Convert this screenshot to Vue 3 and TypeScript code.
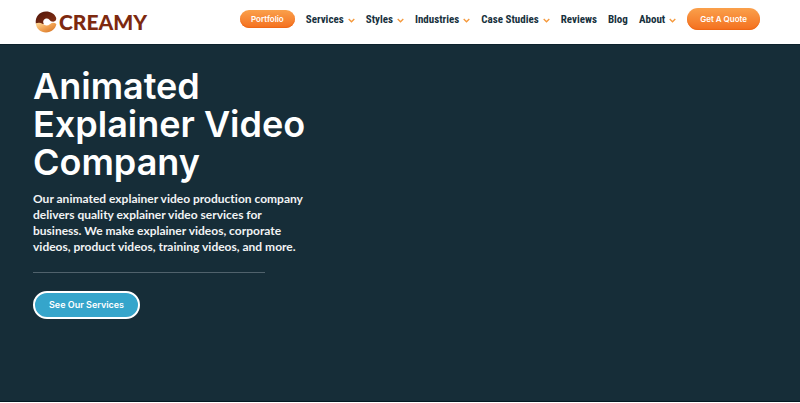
<script setup lang="ts">
interface NavItem {
  label: string
  hasMenu: boolean
}

const navItems: NavItem[] = [
  { label: 'Services', hasMenu: true },
  { label: 'Styles', hasMenu: true },
  { label: 'Industries', hasMenu: true },
  { label: 'Case Studies', hasMenu: true },
  { label: 'Reviews', hasMenu: false },
  { label: 'Blog', hasMenu: false },
  { label: 'About', hasMenu: true },
]
</script>

<template>
  <div class="page">
    <header class="header">
      <a class="logo" href="#">
        <svg class="logo-mark" viewBox="0 0 22 22" aria-hidden="true">
          <defs>
            <linearGradient id="cream" x1="0" y1="0" x2="1" y2="1">
              <stop offset="0" stop-color="#ffdc9b" />
              <stop offset="0.5" stop-color="#f0a050" />
              <stop offset="1" stop-color="#d06c1c" />
            </linearGradient>
            <linearGradient id="cocoa" x1="0" y1="0" x2="1" y2="1">
              <stop offset="0" stop-color="#4f160b" />
              <stop offset="1" stop-color="#8a3214" />
            </linearGradient>
          </defs>
          <path fill="url(#cocoa)" d="M.8 12.500C0 5.500 4.500.5 11 .5c5 0 8.600 2.500 10 6 .8 2.300-.8 4.200-2.800 4.200-1.800 0-3-.9-3.800-2-1.400-1.700-4.600-1.500-5.800.5-.7 1.300-.5 2.800.4 4z" />
          <path fill="url(#cream)" d="M.8 12.500c2.800-1.200 4.900-.8 7 .6 2.700 1.900 5 1.800 7.400-.2 1.900-1.600 4.200-1.600 6.200.2C20.500 18 16.500 21.500 11 21.500S1.500 18 .8 12.500z" />
        </svg>
        <span class="logo-text">CREAMY</span>
      </a>
      <nav class="nav" aria-label="Main">
        <a class="pill portfolio" href="#">Portfolio</a>
        <a v-for="item in navItems" :key="item.label" class="nav-link" href="#">
          {{ item.label }}
          <svg v-if="item.hasMenu" class="chevron" viewBox="0 0 8 5" aria-hidden="true">
            <path d="M.8 .8 4 4 7.200 .8" />
          </svg>
        </a>
        <a class="pill quote" href="#">Get A Quote</a>
      </nav>
    </header>
    <main class="hero">
      <h1>Animated<br />Explainer Video<br />Company</h1>
      <p>
        Our animated explainer video production company<br />
        delivers quality explainer video services for<br />
        business. We make explainer videos, corporate<br />
        videos, product videos, training videos, and more.
      </p>
      <hr />
      <a class="services" href="#">See Our Services</a>
    </main>
  </div>
</template>

<style>
body {
  margin: 0;
  background: #fff;
}
</style>

<style scoped>
.page {
  display: flex;
  flex-direction: column;
  min-height: 100vh;
  box-sizing: border-box;
  padding-bottom: 1px;
  font-family: Inter, sans-serif;
}

a {
  text-decoration: none;
  white-space: nowrap;
}

.header {
  display: flex;
  align-items: center;
  justify-content: space-between;
  height: 44px;
  box-sizing: border-box;
  padding: 0 40px 6px 35px;
  background: #fff;
}

.logo {
  display: flex;
  align-items: center;
  gap: 2px;
  padding-top: 6px;
  color: #7d290f;
}

.logo-mark {
  width: 22px;
  height: 22px;
}

.logo-text {
  font: 900 21px/24px Lato, sans-serif;
}

.nav {
  display: flex;
  align-items: center;
  gap: 11px;
}

.nav-link {
  display: flex;
  align-items: center;
  gap: 4px;
  padding-top: 2px;
  color: #17313d;
  font: bold 11px/16px "Roboto Condensed", "Liberation Sans Narrow", sans-serif;
}

.chevron {
  width: 7px;
  height: 5px;
  fill: none;
  stroke: #f5983a;
  stroke-width: 1.5;
}

.pill {
  box-sizing: border-box;
  border-radius: 12px;
  background: linear-gradient(#faa04b, #f4701f);
  box-shadow: inset 0 -1px 1px #ee6816;
  color: #fff;
  text-align: center;
  font-size: 8px;
  font-weight: 600;
}

.portfolio {
  padding: 0 11px;
  line-height: 18px;
}

.quote {
  padding: 0 13px;
  line-height: 22px;
}

.hero {
  flex: 1;
  box-sizing: border-box;
  padding: 22px 33px;
  border-top: 1px solid #0c212c;
  border-bottom: 1px solid #061923;
  background: #162d38;
  color: #fff;
}

h1 {
  margin: 0;
  font-size: 36px;
  font-weight: 600;
  line-height: 38px;
}

p {
  margin: 10px 0 17px;
  color: #f1f3f4;
  font: bold 12px/16px Lato, sans-serif;
  font-variant-ligatures: none;
}

hr {
  width: 232px;
  height: 1px;
  margin: 0 0 18px;
  border: 0;
  background: #50626c;
}

.services {
  display: inline-block;
  padding: 0 14px;
  border: 2px solid #fff;
  border-radius: 14px;
  background: #35a5cb;
  color: #fff;
  font-size: 9px;
  font-weight: 600;
  line-height: 24px;
}
</style>
